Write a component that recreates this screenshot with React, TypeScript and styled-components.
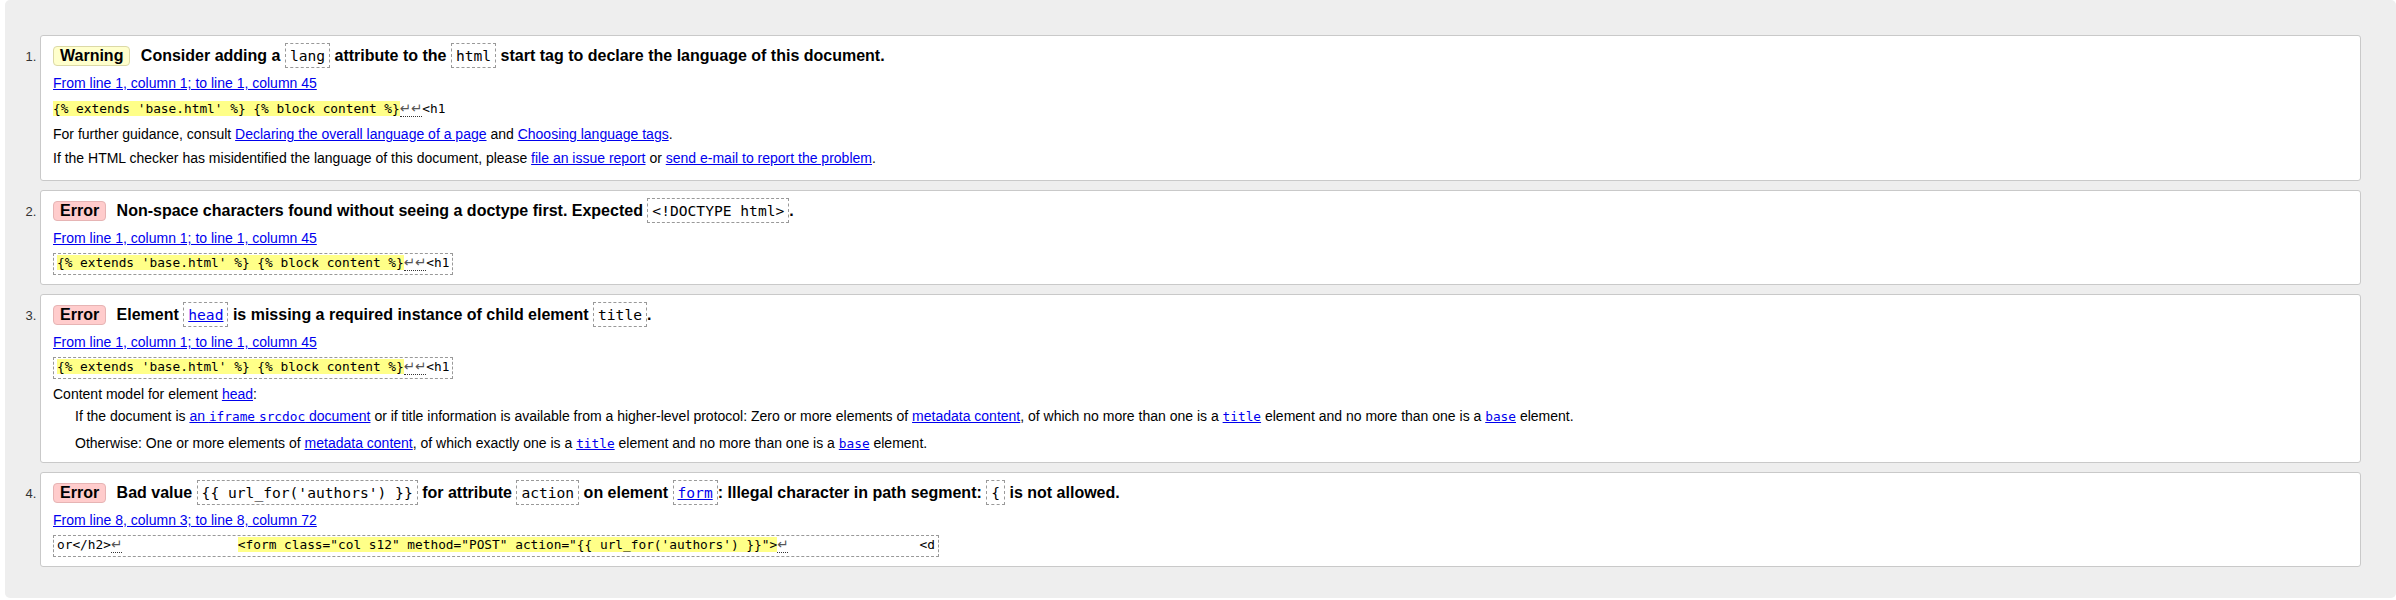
import styled, { createGlobalStyle } from "styled-components";

type Kind = "warning" | "error";

const GlobalStyle = createGlobalStyle`
  html, body {
    margin: 0;
    padding: 0;
    background: #fff;
  }
  body {
    font-family: "Liberation Sans", Arial, sans-serif;
    font-size: 14px;
    color: #000;
  }
`;

const Page = styled.div`
  padding-left: 5px;
`;

const Panel = styled.div`
  background: #eee;
  border-radius: 5px;
  padding: 35px 35px 31px;
`;

const MessageList = styled.ol`
  margin: 0;
  padding: 0;
  list-style: decimal outside;
`;

const Message = styled.li`
  background: #fff;
  border: 1px solid #c9c9c9;
  border-radius: 3px;
  padding: 0 12px 9px;
  margin-bottom: 9px;

  &:last-child {
    margin-bottom: 0;
  }

  &::marker {
    font-size: 13px;
    color: #333;
  }
`;

const Title = styled.p`
  margin: 0;
  padding-top: 10px;
  font-size: 16px;
  line-height: 20px;
  font-weight: bold;
`;

const Badge = styled.strong<{ $kind: Kind }>`
  display: inline-block;
  line-height: 18px;
  padding: 0 6px;
  margin-right: 6px;
  border-radius: 4px;
  border: 1px solid ${({ $kind }) => ($kind === "warning" ? "#dcd9a6" : "#e6b4b4")};
  background: ${({ $kind }) => ($kind === "warning" ? "#ffc" : "#fcc")};
`;

const Code = styled.code`
  font-family: "DejaVu Sans Mono", "Liberation Mono", monospace;
  font-size: 0.914em;
  font-weight: normal;
  border: 1px dashed #999;
  padding: 3px 4px;
`;

const Mono = styled.code`
  font-family: "DejaVu Sans Mono", "Liberation Mono", monospace;
  font-size: 0.914em;
`;

const Link = styled.a`
  color: #00e;
  text-decoration: underline;
`;

const Text = styled.p<{ $gap?: number; $indent?: number }>`
  margin: ${({ $gap }) => $gap ?? 8}px 0 0 ${({ $indent }) => $indent ?? 0}px;
  line-height: 19px;
`;

const Extract = styled.p<{ $boxed?: boolean }>`
  margin: ${({ $boxed }) => ($boxed ? "5px" : "8px")} 0 0;
  font-family: "DejaVu Sans Mono", "Liberation Mono", monospace;
  font-size: 12.8px;
  line-height: ${({ $boxed }) => ($boxed ? "17px" : "16px")};
  white-space: pre;
  display: ${({ $boxed }) => ($boxed ? "inline-block" : "block")};
  border: ${({ $boxed }) => ($boxed ? "1px dashed #999" : "none")};
  padding: ${({ $boxed }) => ($boxed ? "0 3px 3px" : "0")};
`;

const Mark = styled.b`
  font-weight: normal;
  background: #ff8;
`;

const Lf = styled.span`
  font-family: "DejaVu Sans", sans-serif;
  font-size: 13.5px;
  line-height: 0;
  color: #555;
  border-bottom: 1px dotted #333;
`;

const ExtractRow = styled.div`
  line-height: 0;
`;

const Location = ({ children }: { children: string }) => (
  <Text>
    <Link href="#">{children}</Link>
  </Text>
);

const TemplateExtract = ({ boxed }: { boxed?: boolean }) => {
  const body = (
    <Extract $boxed={boxed}>
      <Mark>{"{% extends 'base.html' %} {% block content %}"}</Mark>
      <Lf>↵↵</Lf>
      {"<h1"}
    </Extract>
  );
  return boxed ? <ExtractRow>{body}</ExtractRow> : body;
};

export default function App() {
  return (
    <>
      <GlobalStyle />
      <Page>
        <Panel>
          <MessageList>
            <Message>
              <Title>
                <Badge $kind="warning">Warning</Badge> Consider adding a <Code>lang</Code> attribute to the{" "}
                <Code>html</Code> start tag to declare the language of this document.
              </Title>
              <Location>From line 1, column 1; to line 1, column 45</Location>
              <TemplateExtract />
              <Text>
                For further guidance, consult <Link href="#">Declaring the overall language of a page</Link> and{" "}
                <Link href="#">Choosing language tags</Link>.
              </Text>
              <Text $gap={5} style={{ marginBottom: 3 }}>
                If the HTML checker has misidentified the language of this document, please{" "}
                <Link href="#">file an issue report</Link> or <Link href="#">send e-mail to report the problem</Link>.
              </Text>
            </Message>

            <Message>
              <Title>
                <Badge $kind="error">Error</Badge> Non-space characters found without seeing a doctype first. Expected{" "}
                <Code>{"<!DOCTYPE html>"}</Code>.
              </Title>
              <Location>From line 1, column 1; to line 1, column 45</Location>
              <TemplateExtract boxed />
            </Message>

            <Message>
              <Title>
                <Badge $kind="error">Error</Badge> Element{" "}
                <Code>
                  <Link href="#">head</Link>
                </Code>{" "}
                is missing a required instance of child element <Code>title</Code>.
              </Title>
              <Location>From line 1, column 1; to line 1, column 45</Location>
              <TemplateExtract boxed />
              <Text $gap={6}>
                Content model for element <Link href="#">head</Link>:
              </Text>
              <Text $gap={3} $indent={22}>
                If the document is{" "}
                <Link href="#">
                  an <Mono>iframe</Mono> <Mono>srcdoc</Mono> document
                </Link>{" "}
                or if title information is available from a higher-level protocol: Zero or more elements of{" "}
                <Link href="#">metadata content</Link>, of which no more than one is a{" "}
                <Link href="#">
                  <Mono>title</Mono>
                </Link>{" "}
                element and no more than one is a{" "}
                <Link href="#">
                  <Mono>base</Mono>
                </Link>{" "}
                element.
              </Text>
              <Text $gap={8} $indent={22}>
                Otherwise: One or more elements of <Link href="#">metadata content</Link>, of which exactly one is a{" "}
                <Link href="#">
                  <Mono>title</Mono>
                </Link>{" "}
                element and no more than one is a{" "}
                <Link href="#">
                  <Mono>base</Mono>
                </Link>{" "}
                element.
              </Text>
            </Message>

            <Message>
              <Title>
                <Badge $kind="error">Error</Badge> Bad value <Code>{"{{ url_for('authors') }}"}</Code> for attribute{" "}
                <Code>action</Code> on element{" "}
                <Code>
                  <Link href="#">form</Link>
                </Code>
                : Illegal character in path segment: <Code>{"{"}</Code> is not allowed.
              </Title>
              <Location>From line 8, column 3; to line 8, column 72</Location>
              <ExtractRow>
                <Extract $boxed>
                  {"or</h2>"}
                  <Lf>↵</Lf>
                  {" ".repeat(15)}
                  <Mark>{`<form class="col s12" method="POST" action="{{ url_for('authors') }}">`}</Mark>
                  <Lf>↵</Lf>
                  {" ".repeat(17)}
                  {"<d"}
                </Extract>
              </ExtractRow>
            </Message>
          </MessageList>
        </Panel>
      </Page>
    </>
  );
}
